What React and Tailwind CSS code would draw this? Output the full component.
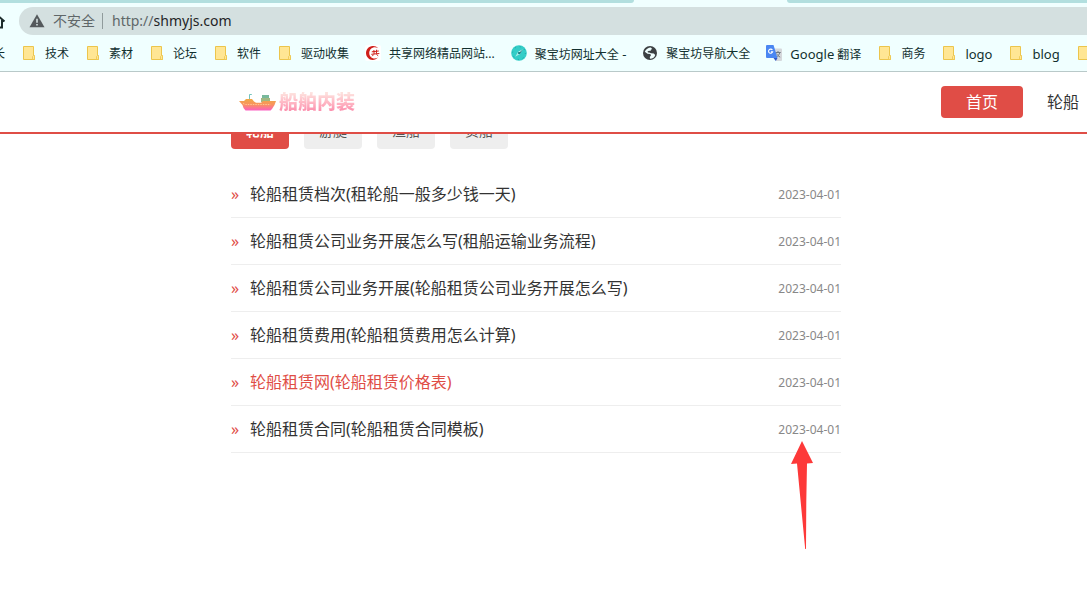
import React from "react";

const articles = [
  { title: "轮船租赁档次(租轮船一般多少钱一天)", date: "2023-04-01" },
  { title: "轮船租赁公司业务开展怎么写(租船运输业务流程)", date: "2023-04-01" },
  { title: "轮船租赁公司业务开展(轮船租赁公司业务开展怎么写)", date: "2023-04-01" },
  { title: "轮船租赁费用(轮船租赁费用怎么计算)", date: "2023-04-01" },
  { title: "轮船租赁网(轮船租赁价格表)", date: "2023-04-01", active: true },
  { title: "轮船租赁合同(轮船租赁合同模板)", date: "2023-04-01" },
];

function FolderIcon() {
  return (
    <svg className="size-4 shrink-0" viewBox="0 0 16 16" aria-hidden="true">
      <path d="M2.500 1.500h10v9h1v4h-11z" fill="#ffe694" stroke="#ecc54c" />
      <path d="M11.500 14.500v-3l1-1 1 1v3z" fill="#ffe694" stroke="#ecc54c" strokeWidth="0.8" />
    </svg>
  );
}

function GongIcon() {
  return (
    <svg className="size-4 shrink-0" viewBox="0 0 16 16" aria-hidden="true">
      <rect width="16" height="16" rx="2" fill="#fff" />
      <path d="M13.200 3.200C11.600 1.400 9.600.8 7.600 1 3.800 1.300 1 4.300 1 8s2.900 6.900 6.600 7c2.200 0 4-.8 5.400-2.400-1.500.8-3 1.200-4.500.9C5.900 13 4.200 10.800 4.200 8s1.600-5 4.100-5.600c1.700-.4 3.300 0 4.900.8z" fill="#cf1f1a" />
      <path d="M6.800 6.800l7-.8M6.300 9.300l8-.8M8.900 5l.2 4M11.600 4.700l-.2 4M8.600 9.600l-1.400 1.600M11.400 9.300l1.800 1.500" fill="none" stroke="#cf1f1a" strokeWidth="1" />
    </svg>
  );
}

function CompassIcon() {
  return (
    <svg className="size-4 shrink-0" viewBox="0 0 16 16" aria-hidden="true">
      <circle cx="8" cy="8" r="7.800" fill="#33cdc7" />
      <circle cx="8" cy="8" r="6.400" fill="none" stroke="#1aa3a3" strokeDasharray="1 4.020" />
      <path d="M11.800 4.200 9 9 7 7z" fill="#d5f7f4" />
      <path d="M4.200 11.800 7 7 9 9z" fill="#a7ebe6" />
      <path d="M11.800 4.200 9 9 8 8z" fill="#12767f" />
      <circle cx="8" cy="8" r="1" fill="#0e6d77" />
    </svg>
  );
}

function GlobeIcon() {
  return (
    <svg className="size-4 shrink-0" viewBox="0 0 16 16" aria-hidden="true">
      <circle cx="8" cy="8" r="7" fill="#3c4043" />
      <path d="M8.800 2.500C6.500 2.700 3.700 4 2.800 6.700l2.700 2.100 2.900.3.500 1.400-1.100 1.400.2 1.900c2.900 0 4.700-1.500 5.200-3.700l-1.400-1.500-2.900-.3-1.700-.8-1.200.1-.5-1.100 1.500-.8 1.500.2.300-1.100 1.400-.8z" fill="#f0ffff" />
    </svg>
  );
}

function TranslateIcon() {
  return (
    <svg className="size-4 shrink-0" viewBox="0 0 16 16" aria-hidden="true">
      <path d="M6 3.500h9a1 1 0 0 1 1 1V15a1 1 0 0 1-1 1h-5z" fill="#d5d8dc" />
      <path d="M9.300 7.500h5.400M12 6v1.500M13.800 7.500c-.5 2.200-1.900 3.800-3.800 4.800M10.600 8.500c.7 1.600 1.900 2.800 3.600 3.600" fill="none" stroke="#6f7a85" />
      <path d="M7.500 13h4L9.800 16z" fill="#2f56c5" />
      <path d="M1 0h6.500l4 13H1a1 1 0 0 1-1-1V1a1 1 0 0 1 1-1z" fill="#4a86f2" />
      <path d="M6.400 5A2.100 2.100 0 1 0 6.700 6.700H4.900" fill="none" stroke="#fff" strokeWidth="1.100" />
    </svg>
  );
}

const bookmarks = [
  { cjk: "技术", Icon: FolderIcon },
  { cjk: "素材", Icon: FolderIcon },
  { cjk: "论坛", Icon: FolderIcon },
  { cjk: "软件", Icon: FolderIcon },
  { cjk: "驱动收集", Icon: FolderIcon },
  { cjk: "共享网络精品网站...", Icon: GongIcon },
  { cjk: "聚宝坊网址大全", after: " -", Icon: CompassIcon },
  { cjk: "聚宝坊导航大全", Icon: GlobeIcon },
  { before: "Google", cjk: " 翻译", Icon: TranslateIcon },
  { cjk: "商务", Icon: FolderIcon },
  { before: "logo", Icon: FolderIcon },
  { before: "blog", Icon: FolderIcon },
  { Icon: FolderIcon },
];

function BrowserBar() {
  return (
    <div className="border-b border-[#b9c9c9] bg-[#f0ffff]">
      <div className="flex h-[3px]">
        <div className="w-[634px] rounded-br-md bg-[#b2dfdf]" />
        <div className="w-[153px]" />
        <div className="grow rounded-bl-md bg-[#b2dfdf]" />
      </div>
      <div className="flex items-center overflow-hidden pt-1">
        <button type="button" aria-label="主页" className="-ml-3 mr-[13px] shrink-0">
          <svg className="size-[18px]" viewBox="0 0 18 18" aria-hidden="true">
            <path d="M1.500 9.500 9 2.800l7.500 6.700M4 8v7.500h3.500v-5h3v5H14V8" fill="none" stroke="#1d2b2b" strokeWidth="2" />
          </svg>
        </button>
        <div className="flex h-7 grow items-center rounded-l-full bg-[#d4e0e0] pl-[10px] text-sm">
          <svg className="size-4 shrink-0" viewBox="0 0 16 16" aria-hidden="true">
            <path d="M8 1.200 15.500 14.200H.5z" fill="#54595c" />
            <path d="M7.200 5.800h1.600v4H7.200zM7.200 11h1.600v1.600H7.200z" fill="#d4e0e0" />
          </svg>
          <span className="ml-2 text-[#5f6769]">不安全</span>
          <span className="mr-[9px] ml-[7px] h-4 w-px bg-[#909b9c]" />
          <label htmlFor="address" className="text-[#5f6769]">http://</label>
          <input id="address" type="text" defaultValue="shmyjs.com" className="min-w-0 grow bg-transparent text-[#1f2426] outline-none" />
        </div>
      </div>
      <nav className="flex h-9 items-center gap-4 overflow-hidden whitespace-nowrap text-xs text-[#12302f]">
        <a href="#" className="-ml-[7px] shrink-0 pt-0.5">长</a>
        {bookmarks.map(({ before, cjk, after, Icon }, i) => (
          <a key={i} href="#" aria-label={before || cjk ? undefined : "书签"} className="flex shrink-0 items-center gap-2">
            <Icon />
            <span className="pt-0.5 whitespace-pre">
              {before && <span className="text-[13px] leading-4">{before}</span>}
              {cjk}
              {after && <span className="text-[13px] leading-4">{after}</span>}
            </span>
          </a>
        ))}
      </nav>
    </div>
  );
}

function Logo() {
  return (
    <a href="#" className="flex items-center gap-0.5">
      <svg className="h-[18px] w-[38px]" viewBox="0 0 38 18" aria-hidden="true">
        <defs>
          <linearGradient id="hull" x1="0" y1="0" x2="0" y2="1">
            <stop offset="0" stopColor="#eeaa45" />
            <stop offset="0.500" stopColor="#fa9160" />
            <stop offset="1" stopColor="#fb5fc0" />
          </linearGradient>
        </defs>
        <path d="M10.500 7V1.500h2.300" fill="none" stroke="#73c5bd" />
        <path d="M23 2h7v4h-7z" fill="#78b99c" />
        <path d="M22 5h9v4h-9z" fill="#a1b983" />
        <path d="M0 8h5l2-2h6l2 2.500 2 1.200h5l2-1.700h13l-1.500 4-2.500 4-1.500 1.500H6.500l-2-2.500-1-3z" fill="url(#hull)" />
        <path d="M4 10.500l2.500 1h25" fill="none" stroke="#ffc58f" strokeDasharray="1.500 1" />
      </svg>
      <span className="bg-linear-to-b from-[#fde0dd] from-20% to-[#fb8bab] to-85% bg-clip-text text-[19px] leading-7 font-black text-transparent">船舶内装</span>
    </a>
  );
}

function SiteHeader() {
  return (
    <header className="relative z-10 flex items-center justify-between overflow-hidden border-b-2 border-[#df4d46] bg-white py-[14px] pl-[239px]">
      <Logo />
      <nav className="flex items-center text-base leading-8 text-[#333]">
        <a href="#" className="rounded-sm bg-[#e04d46] px-[25px] text-white">首页</a>
        <a href="#" className="pr-2 pl-6">轮船</a>
      </nav>
    </header>
  );
}

function PointerArrow() {
  return (
    <svg className="absolute top-[35px] right-7 h-[108px] w-[22px]" viewBox="0 0 22 108" aria-hidden="true">
      <path d="M11 0 22 22l-6 .5L15.300 60 15 108h-.8L6 22.500 0 23z" fill="#fd3939" />
    </svg>
  );
}

export default function App() {
  return (
    <div className="min-h-screen overflow-hidden bg-white font-['Noto_Sans','Noto_Sans_CJK_SC',sans-serif]">
      <BrowserBar />
      <SiteHeader />
      <main className="-mt-[17px] ml-[231px] max-w-[610px]">
        <div className="flex gap-[15px] text-sm leading-7 text-[#555]">
          {["轮船", "游艇", "渔船", "货船"].map((name, i) => (
            <button
              key={name}
              type="button"
              className={i === 0 ? "rounded-sm bg-[#e04d46] px-[15px] pb-1 font-bold text-white" : "rounded-sm bg-[#eee] px-[15px] pb-1"}
            >
              {name}
            </button>
          ))}
        </div>
        <ul className="mt-[22px]">
          {articles.map(({ title, date, active }, i) => (
            <li key={title} className="relative flex items-center justify-between border-b border-[#eee] text-base leading-[46px]">
              <a href="#" className={active ? "flex text-[#df4d46]" : "flex text-[#333]"}>
                <span className="w-[19px] text-[#df4d46]">»</span>
                {title}
              </a>
              <time dateTime={date} className="pt-0.5 text-xs leading-5 text-[#888]">{date}</time>
              {i === articles.length - 1 && <PointerArrow />}
            </li>
          ))}
        </ul>
      </main>
    </div>
  );
}
